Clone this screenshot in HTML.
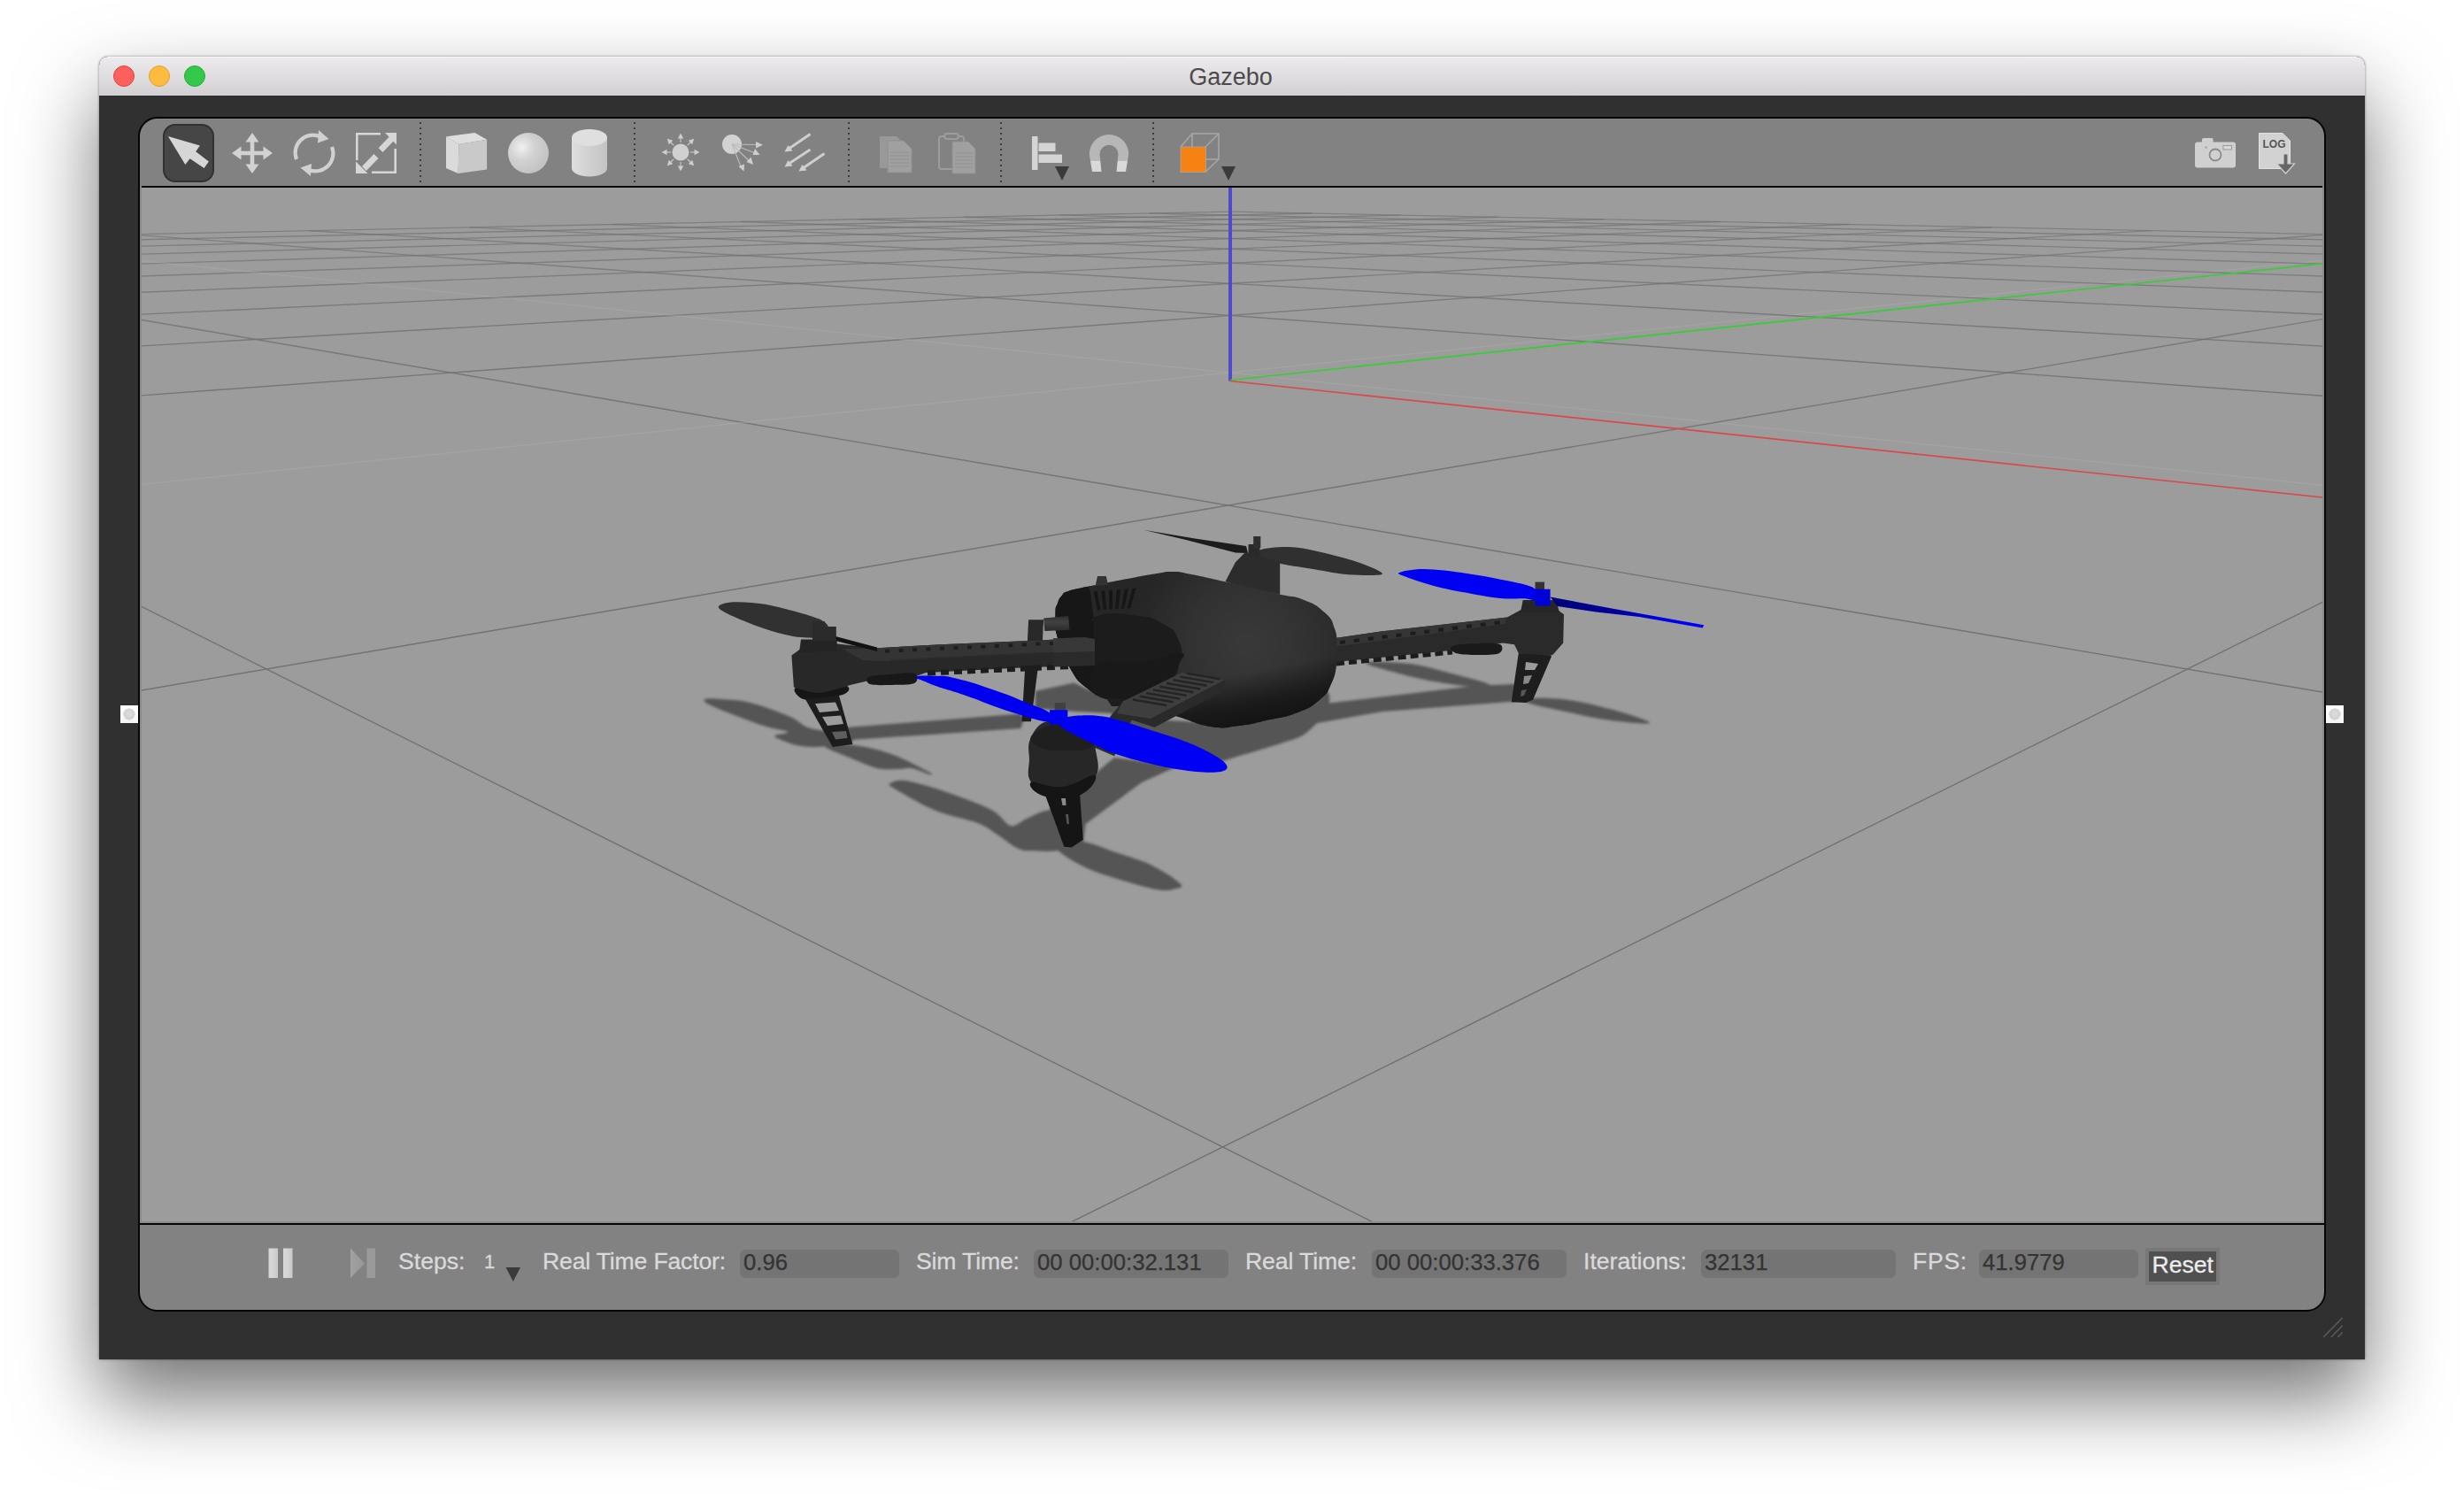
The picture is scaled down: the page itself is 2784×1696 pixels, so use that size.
<!DOCTYPE html>
<html><head><meta charset="utf-8"><title>Gazebo</title>
<style>
*{box-sizing:border-box;margin:0;padding:0}
html,body{width:2784px;height:1696px;background:#fff;overflow:hidden}
body{position:relative;font-family:"Liberation Sans",sans-serif}
.win{position:absolute;left:112px;top:64px;width:2560px;height:1472px;background:#303030;border-radius:10px 10px 0 0;
 box-shadow:0 44px 90px rgba(0,0,0,.55),0 0 3px rgba(0,0,0,.45)}
.tb{position:absolute;left:0;top:0;width:2560px;height:44px;border-radius:10px 10px 0 0;background:linear-gradient(#eceaec,#d2d0d2);border-top:1px solid #f6f6f6}
.tl{position:absolute;top:9px;width:24px;height:24px;border-radius:50%}
.title{position:absolute;left:-1.5px;width:2560px;top:5.5px;text-align:center;font-size:27px;line-height:32px;color:#4b4b4b}
.panel{position:absolute;left:156px;top:132px;width:2472px;height:1350px;border:2px solid #050505;border-radius:22px;background:#828282}
.abs{position:absolute}
.sep{position:absolute;top:138px;width:2px;height:68px;background:repeating-linear-gradient(#3c3c3c 0 2px,transparent 2px 6px)}
.lbl{position:absolute;top:1409px;font-size:26.6px;line-height:32px;color:#dadada;white-space:nowrap;-webkit-text-stroke:0.3px #dadada}
.fld{position:absolute;top:1412px;height:32px;border-radius:7px;background:#747474;color:#333;font-size:25.7px;line-height:29px;padding-left:4px;white-space:nowrap;-webkit-text-stroke:0.25px #333}
</style></head><body>
<div class="win"><div class="tb">
<div class="tl" style="left:16px;background:#fc605c;border:1px solid #e0443e"></div>
<div class="tl" style="left:56px;background:#fdbc40;border:1px solid #dea034"></div>
<div class="tl" style="left:96px;background:#34c84a;border:1px solid #27aa35"></div>
<div class="title">Gazebo</div></div></div>
<div class="panel"></div>
<div class="abs" style="left:160px;top:210px;width:2464px;height:2px;background:#050505"></div>
<div class="abs" style="left:158px;top:1382px;width:2468px;height:2px;background:#050505"></div>
<div class="abs" style="left:158px;top:212px;width:2468px;height:1170px;background:#8b8b8b"></div>
<div class="sep" style="left:474px"></div><div class="sep" style="left:716px"></div><div class="sep" style="left:958px"></div><div class="sep" style="left:1130px"></div><div class="sep" style="left:1302px"></div>
<svg class="abs" style="left:158px;top:134px" width="2468" height="76" viewBox="158 134 2468 76">
<defs>
<radialGradient id="sph" cx="0.34" cy="0.36" r="0.7"><stop offset="0" stop-color="#f0f0f0"/><stop offset="0.45" stop-color="#d2d2d2"/><stop offset="1" stop-color="#c2c2c2"/></radialGradient>
<linearGradient id="cyl" x1="0" x2="1"><stop offset="0" stop-color="#dedede"/><stop offset="1" stop-color="#c3c3c3"/></linearGradient>
<linearGradient id="mag" x1="0" x2="0" y1="0" y2="1"><stop offset="0" stop-color="#b6b6b6"/><stop offset="0.7" stop-color="#b8b8b8"/><stop offset="0.72" stop-color="#dadada"/><stop offset="1" stop-color="#d6d6d6"/></linearGradient>
</defs>
<!-- select -->
<rect x="185" y="141" width="56" height="64" rx="13" fill="#464646" stroke="#313131" stroke-width="2"/>
<polygon points="189.9,153.9 225.9,164.6 221.2,171.2 235.9,182.6 230.6,189.9 214.6,179.2 209.3,185.9" fill="#d6d6d6"/>
<!-- move -->
<g fill="#d2d2d2"><rect x="282.700" y="156" width="4.600" height="34"/><rect x="268" y="170.700" width="34" height="4.600"/>
<polygon points="285,150 292.5,160.5 277.5,160.5"/><polygon points="285,196 292.5,185.500 277.5,185.5"/>
<polygon points="262,173 272.5,165.5 272.5,180.5"/><polygon points="308,173 297.5,165.5 297.5,180.5"/></g>
<!-- rotate -->
<g fill="none" stroke="#d0d0d0" stroke-width="4.200"><path d="M335,180 A20,20 0 0 1 362,154.500"/><path d="M375,166 A20,20 0 0 1 349,192"/></g>
<polygon points="360,147 371.500,157 359,161.500" fill="#d0d0d0"/><polygon points="351,199 339.500,189.500 352,185" fill="#d0d0d0"/>
<!-- scale -->
<g fill="none" stroke="#d6d6d6" stroke-width="2.6"><path d="M430,151.300 H403.300 V181"/><path d="M420,194.700 H446.700 V168"/></g>
<g fill="#d6d6d6"><polygon points="435,150 448,150 448,163.500"/><polygon points="402,182.500 402,196 415.500,196"/>
<polygon points="427.600,167.300 441,153.300 446,158 432.500,172"/><polygon points="409,188 422.500,174 427.500,179 413.800,193"/></g>
<!-- box -->
<polygon points="504,154.400 536.500,150.100 550.100,157.700 518.300,162.900" fill="#dedede"/>
<polygon points="504,154.400 518.300,162.900 517.700,196 504,190.100" fill="#dadada"/>
<polygon points="518.300,162.900 550.100,157.700 550.100,191.400 517.700,196" fill="#c9c9c9"/>
<!-- sphere -->
<circle cx="597" cy="173" r="23" fill="url(#sph)"/>
<!-- cylinder -->
<path d="M646,155.500 V190 A20,9.500 0 0 0 686,190 V155.500 Z" fill="url(#cyl)"/>
<ellipse cx="666" cy="155.500" rx="20" ry="9.500" fill="#dfdfdf"/>
<!-- point light -->
<g fill="#cdcdcd" stroke="#c4c4c4"><circle cx="769" cy="172" r="9.500" stroke="none" fill="#d0d0d0"/>
<g id="ray"><line x1="769" y1="161" x2="769" y2="154" stroke-width="1.200"/><polygon points="769,150.500 772.200,156.500 765.800,156.500" stroke="none"/></g>
<use href="#ray" transform="rotate(45 769 172)"/><use href="#ray" transform="rotate(90 769 172)"/><use href="#ray" transform="rotate(135 769 172)"/><use href="#ray" transform="rotate(180 769 172)"/><use href="#ray" transform="rotate(225 769 172)"/><use href="#ray" transform="rotate(270 769 172)"/><use href="#ray" transform="rotate(315 769 172)"/></g>
<!-- spot light -->
<g fill="#cecece" stroke="#bcbcbc" stroke-width="1.200"><circle cx="827" cy="163" r="11" stroke="none" fill="#d2d2d2"/>
<line x1="827" y1="163" x2="855" y2="163.500"/><line x1="827" y1="163" x2="852" y2="172.500"/><line x1="827" y1="163" x2="846" y2="181.500"/><line x1="827" y1="163" x2="837" y2="188"/>
<g stroke="none"><polygon points="862,163.700 854,160 854,167.500"/><polygon points="858.500,175 850.500,175 853,168"/><polygon points="851,186 843.500,183 848.500,177.500"/><polygon points="840.500,193.500 834.500,188 841,185.500"/></g></g>
<!-- directional -->
<g stroke="#cecece" stroke-width="3"><line x1="915.500" y1="151.500" x2="892" y2="167.500"/><line x1="915.500" y1="169" x2="892" y2="184.500"/><line x1="931.500" y1="173.500" x2="908" y2="189.500"/></g>
<g fill="#d0d0d0"><polygon points="886.500,171.500 890.500,164 895.500,170.500"/><polygon points="886.500,188.500 890.500,181 895.500,187.500"/><polygon points="902.500,193.500 906.500,186 911.500,192.500"/></g>
<!-- copy (disabled) -->
<g fill="#9b9b9b"><path d="M994,154 H1013 L1021,162 V190 H994 Z" fill="#999"/><path d="M1003,159 H1021 L1030,168 V195 H1003 Z" fill="#a0a0a0" stroke="#8e8e8e" stroke-width="1"/></g>
<g stroke="#929292" stroke-width="1"><line x1="1006" y1="172" x2="1027" y2="172"/><line x1="1006" y1="176" x2="1027" y2="176"/><line x1="1006" y1="180" x2="1027" y2="180"/><line x1="1006" y1="184" x2="1027" y2="184"/><line x1="1006" y1="188" x2="1027" y2="188"/></g>
<!-- paste (disabled) -->
<rect x="1061" y="154" width="28" height="37" rx="3" fill="none" stroke="#9c9c9c" stroke-width="2"/><rect x="1067" y="151" width="16" height="6" rx="3" fill="#828282" stroke="#9c9c9c" stroke-width="2"/>
<path d="M1076,160 H1094 L1102,168 V196 H1076 Z" fill="#a0a0a0" stroke="#8e8e8e" stroke-width="1"/>
<g stroke="#929292" stroke-width="1"><line x1="1079" y1="173" x2="1099" y2="173"/><line x1="1079" y1="177" x2="1099" y2="177"/><line x1="1079" y1="181" x2="1099" y2="181"/><line x1="1079" y1="185" x2="1099" y2="185"/><line x1="1079" y1="189" x2="1099" y2="189"/></g>
<!-- align -->
<g fill="#d4d4d4"><rect x="1166" y="154" width="6.500" height="38"/><rect x="1173.500" y="161.500" width="19" height="9.500"/><rect x="1173.500" y="174.500" width="26.500" height="9.500"/></g>
<polygon points="1192,188 1208,188 1200,204" fill="#3a3a3a"/>
<!-- magnet -->
<path d="M1230.800,174.200 A22.200,22.200 0 0 1 1275.200,174.200 L1272,194 L1261.500,194 L1263.500,174.200 A10.500,10.500 0 0 0 1242.500,174.200 L1244.500,194 L1234,194 Z" fill="url(#mag)"/>
<!-- orange cube -->
<g fill="none" stroke="#a6a6a6" stroke-width="1.600"><rect x="1347" y="151" width="30" height="29"/><line x1="1334" y1="166" x2="1347" y2="151"/><line x1="1362" y1="166" x2="1377" y2="151"/><line x1="1362" y1="194" x2="1377" y2="180"/><line x1="1334" y1="194" x2="1347" y2="180"/></g>
<rect x="1334" y="166" width="28.500" height="28.500" fill="#f58213" stroke="#b0a090" stroke-width="1"/>
<polygon points="1380,188 1396,188 1388,204" fill="#3a3a3a"/>
<!-- camera -->
<g fill="#d0d0d0"><rect x="2480" y="160.500" width="46" height="29" rx="3"/><rect x="2488" y="156" width="12.500" height="6" rx="1.500"/></g>
<circle cx="2503" cy="175" r="6.500" fill="#d0d0d0" stroke="#8a8a8a" stroke-width="1.800"/><rect x="2512" y="164.500" width="9.500" height="4.500" fill="#d8d8d8" stroke="#9a9a9a" stroke-width="1"/><rect x="2491.500" y="165.500" width="2" height="2" fill="#999"/>
<!-- log -->
<path d="M2552.500,150.500 H2579 L2587.500,159 V190.500 H2552.500 Z" fill="#d2d2d2" stroke="#e2e2e2" stroke-width="1"/>
<text x="2556.500" y="167.300" font-family="Liberation Sans,sans-serif" font-weight="bold" font-size="12.500" fill="#555" textLength="26" lengthAdjust="spacingAndGlyphs">LOG</text>
<path d="M2580,174 H2585 V185 H2592.500 L2582.500,196 L2572.500,185 H2580 Z" fill="#666" stroke="#cfcfcf" stroke-width="1.200"/>
</svg>
<svg class="vp" width="2464" height="1168" viewBox="160 212 2464 1168" style="position:absolute;left:160px;top:212px">
<rect x="160" y="212" width="2464" height="1170" fill="#9c9c9c"/>
<g stroke-width="1.4" fill="none">
<defs><linearGradient id="g1" gradientUnits="userSpaceOnUse" x1="130.0" y1="265.2" x2="1390.7" y2="239.1"><stop offset="0.00" stop-color="#707070" stop-opacity="0.66"/><stop offset="0.15" stop-color="#707070" stop-opacity="0.66"/><stop offset="0.30" stop-color="#707070" stop-opacity="0.66"/><stop offset="0.50" stop-color="#707070" stop-opacity="0.66"/><stop offset="0.70" stop-color="#707070" stop-opacity="0.66"/><stop offset="0.85" stop-color="#707070" stop-opacity="0.66"/><stop offset="1.00" stop-color="#707070" stop-opacity="0.66"/></linearGradient><linearGradient id="g2" gradientUnits="userSpaceOnUse" x1="130.0" y1="271.5" x2="1482.9" y2="241.0"><stop offset="0.00" stop-color="#707070" stop-opacity="0.66"/><stop offset="0.15" stop-color="#707070" stop-opacity="0.66"/><stop offset="0.30" stop-color="#707070" stop-opacity="0.66"/><stop offset="0.50" stop-color="#707070" stop-opacity="0.66"/><stop offset="0.70" stop-color="#707070" stop-opacity="0.66"/><stop offset="0.85" stop-color="#707070" stop-opacity="0.66"/><stop offset="1.00" stop-color="#707070" stop-opacity="0.66"/></linearGradient><linearGradient id="g3" gradientUnits="userSpaceOnUse" x1="130.0" y1="278.9" x2="1583.0" y2="243.1"><stop offset="0.00" stop-color="#707070" stop-opacity="0.66"/><stop offset="0.15" stop-color="#707070" stop-opacity="0.66"/><stop offset="0.30" stop-color="#707070" stop-opacity="0.66"/><stop offset="0.50" stop-color="#707070" stop-opacity="0.66"/><stop offset="0.70" stop-color="#707070" stop-opacity="0.66"/><stop offset="0.85" stop-color="#707070" stop-opacity="0.66"/><stop offset="1.00" stop-color="#707070" stop-opacity="0.66"/></linearGradient><linearGradient id="g4" gradientUnits="userSpaceOnUse" x1="130.0" y1="287.9" x2="1692.3" y2="245.3"><stop offset="0.00" stop-color="#707070" stop-opacity="0.66"/><stop offset="0.15" stop-color="#707070" stop-opacity="0.66"/><stop offset="0.30" stop-color="#707070" stop-opacity="0.66"/><stop offset="0.50" stop-color="#707070" stop-opacity="0.66"/><stop offset="0.70" stop-color="#707070" stop-opacity="0.66"/><stop offset="0.85" stop-color="#707070" stop-opacity="0.66"/><stop offset="1.00" stop-color="#707070" stop-opacity="0.66"/></linearGradient><linearGradient id="g5" gradientUnits="userSpaceOnUse" x1="130.0" y1="299.0" x2="1811.9" y2="247.8"><stop offset="0.00" stop-color="#707070" stop-opacity="0.66"/><stop offset="0.15" stop-color="#707070" stop-opacity="0.66"/><stop offset="0.30" stop-color="#707070" stop-opacity="0.66"/><stop offset="0.50" stop-color="#707070" stop-opacity="0.66"/><stop offset="0.70" stop-color="#707070" stop-opacity="0.66"/><stop offset="0.85" stop-color="#707070" stop-opacity="0.66"/><stop offset="1.00" stop-color="#707070" stop-opacity="0.66"/></linearGradient><linearGradient id="g6" gradientUnits="userSpaceOnUse" x1="130.0" y1="313.1" x2="1943.5" y2="250.5"><stop offset="0.00" stop-color="#707070" stop-opacity="0.69"/><stop offset="0.15" stop-color="#707070" stop-opacity="0.66"/><stop offset="0.30" stop-color="#707070" stop-opacity="0.66"/><stop offset="0.50" stop-color="#707070" stop-opacity="0.66"/><stop offset="0.70" stop-color="#707070" stop-opacity="0.66"/><stop offset="0.85" stop-color="#707070" stop-opacity="0.66"/><stop offset="1.00" stop-color="#707070" stop-opacity="0.66"/></linearGradient><linearGradient id="g7" gradientUnits="userSpaceOnUse" x1="130.0" y1="331.4" x2="2088.9" y2="253.5"><stop offset="0.00" stop-color="#707070" stop-opacity="0.74"/><stop offset="0.15" stop-color="#707070" stop-opacity="0.71"/><stop offset="0.30" stop-color="#707070" stop-opacity="0.67"/><stop offset="0.50" stop-color="#707070" stop-opacity="0.66"/><stop offset="0.70" stop-color="#707070" stop-opacity="0.66"/><stop offset="0.85" stop-color="#707070" stop-opacity="0.66"/><stop offset="1.00" stop-color="#707070" stop-opacity="0.66"/></linearGradient><linearGradient id="g8" gradientUnits="userSpaceOnUse" x1="130.0" y1="356.5" x2="2250.5" y2="256.9"><stop offset="0.00" stop-color="#707070" stop-opacity="0.79"/><stop offset="0.15" stop-color="#707070" stop-opacity="0.76"/><stop offset="0.30" stop-color="#707070" stop-opacity="0.73"/><stop offset="0.50" stop-color="#707070" stop-opacity="0.67"/><stop offset="0.70" stop-color="#707070" stop-opacity="0.66"/><stop offset="0.85" stop-color="#707070" stop-opacity="0.66"/><stop offset="1.00" stop-color="#707070" stop-opacity="0.66"/></linearGradient><linearGradient id="g9" gradientUnits="userSpaceOnUse" x1="130.0" y1="392.6" x2="2431.0" y2="260.6"><stop offset="0.00" stop-color="#707070" stop-opacity="0.83"/><stop offset="0.15" stop-color="#707070" stop-opacity="0.81"/><stop offset="0.30" stop-color="#707070" stop-opacity="0.78"/><stop offset="0.50" stop-color="#707070" stop-opacity="0.73"/><stop offset="0.70" stop-color="#707070" stop-opacity="0.66"/><stop offset="0.85" stop-color="#707070" stop-opacity="0.66"/><stop offset="1.00" stop-color="#707070" stop-opacity="0.66"/></linearGradient><linearGradient id="g10" gradientUnits="userSpaceOnUse" x1="130.0" y1="670.5" x2="1613.6" y2="1412.0"><stop offset="0.00" stop-color="#707070" stop-opacity="0.96"/><stop offset="0.15" stop-color="#707070" stop-opacity="0.97"/><stop offset="0.30" stop-color="#707070" stop-opacity="0.99"/><stop offset="0.50" stop-color="#707070" stop-opacity="1.00"/><stop offset="0.70" stop-color="#707070" stop-opacity="1.00"/><stop offset="0.85" stop-color="#707070" stop-opacity="1.00"/><stop offset="1.00" stop-color="#707070" stop-opacity="1.00"/></linearGradient><linearGradient id="g11" gradientUnits="userSpaceOnUse" x1="130.0" y1="449.1" x2="2634.0" y2="264.8"><stop offset="0.00" stop-color="#707070" stop-opacity="0.88"/><stop offset="0.15" stop-color="#707070" stop-opacity="0.86"/><stop offset="0.30" stop-color="#707070" stop-opacity="0.83"/><stop offset="0.50" stop-color="#707070" stop-opacity="0.79"/><stop offset="0.70" stop-color="#707070" stop-opacity="0.71"/><stop offset="0.85" stop-color="#707070" stop-opacity="0.66"/><stop offset="1.00" stop-color="#707070" stop-opacity="0.66"/></linearGradient><linearGradient id="g12" gradientUnits="userSpaceOnUse" x1="130.0" y1="356.3" x2="2654.0" y2="787.2"><stop offset="0.00" stop-color="#707070" stop-opacity="0.78"/><stop offset="0.15" stop-color="#707070" stop-opacity="0.86"/><stop offset="0.30" stop-color="#707070" stop-opacity="0.90"/><stop offset="0.50" stop-color="#707070" stop-opacity="0.93"/><stop offset="0.70" stop-color="#707070" stop-opacity="0.95"/><stop offset="0.85" stop-color="#707070" stop-opacity="0.97"/><stop offset="1.00" stop-color="#707070" stop-opacity="0.97"/></linearGradient><linearGradient id="g13" gradientUnits="userSpaceOnUse" x1="130.0" y1="785.1" x2="2654.0" y2="355.5"><stop offset="0.00" stop-color="#707070" stop-opacity="0.97"/><stop offset="0.15" stop-color="#707070" stop-opacity="0.97"/><stop offset="0.30" stop-color="#707070" stop-opacity="0.95"/><stop offset="0.50" stop-color="#707070" stop-opacity="0.93"/><stop offset="0.70" stop-color="#707070" stop-opacity="0.90"/><stop offset="0.85" stop-color="#707070" stop-opacity="0.86"/><stop offset="1.00" stop-color="#707070" stop-opacity="0.78"/></linearGradient><linearGradient id="g14" gradientUnits="userSpaceOnUse" x1="147.1" y1="264.9" x2="2654.0" y2="449.5"><stop offset="0.00" stop-color="#707070" stop-opacity="0.66"/><stop offset="0.15" stop-color="#707070" stop-opacity="0.66"/><stop offset="0.30" stop-color="#707070" stop-opacity="0.71"/><stop offset="0.50" stop-color="#707070" stop-opacity="0.79"/><stop offset="0.70" stop-color="#707070" stop-opacity="0.83"/><stop offset="0.85" stop-color="#707070" stop-opacity="0.86"/><stop offset="1.00" stop-color="#707070" stop-opacity="0.88"/></linearGradient><linearGradient id="g15" gradientUnits="userSpaceOnUse" x1="1147.4" y1="1412.0" x2="2654.0" y2="665.6"><stop offset="0.00" stop-color="#707070" stop-opacity="1.00"/><stop offset="0.15" stop-color="#707070" stop-opacity="1.00"/><stop offset="0.30" stop-color="#707070" stop-opacity="1.00"/><stop offset="0.50" stop-color="#707070" stop-opacity="1.00"/><stop offset="0.70" stop-color="#707070" stop-opacity="0.99"/><stop offset="0.85" stop-color="#707070" stop-opacity="0.97"/><stop offset="1.00" stop-color="#707070" stop-opacity="0.96"/></linearGradient><linearGradient id="g16" gradientUnits="userSpaceOnUse" x1="350.1" y1="260.7" x2="2654.0" y2="392.8"><stop offset="0.00" stop-color="#707070" stop-opacity="0.66"/><stop offset="0.15" stop-color="#707070" stop-opacity="0.66"/><stop offset="0.30" stop-color="#707070" stop-opacity="0.66"/><stop offset="0.50" stop-color="#707070" stop-opacity="0.73"/><stop offset="0.70" stop-color="#707070" stop-opacity="0.78"/><stop offset="0.85" stop-color="#707070" stop-opacity="0.81"/><stop offset="1.00" stop-color="#707070" stop-opacity="0.83"/></linearGradient><linearGradient id="g17" gradientUnits="userSpaceOnUse" x1="530.7" y1="256.9" x2="2654.0" y2="356.6"><stop offset="0.00" stop-color="#707070" stop-opacity="0.66"/><stop offset="0.15" stop-color="#707070" stop-opacity="0.66"/><stop offset="0.30" stop-color="#707070" stop-opacity="0.66"/><stop offset="0.50" stop-color="#707070" stop-opacity="0.67"/><stop offset="0.70" stop-color="#707070" stop-opacity="0.73"/><stop offset="0.85" stop-color="#707070" stop-opacity="0.76"/><stop offset="1.00" stop-color="#707070" stop-opacity="0.79"/></linearGradient><linearGradient id="g18" gradientUnits="userSpaceOnUse" x1="692.2" y1="253.6" x2="2654.0" y2="331.5"><stop offset="0.00" stop-color="#707070" stop-opacity="0.66"/><stop offset="0.15" stop-color="#707070" stop-opacity="0.66"/><stop offset="0.30" stop-color="#707070" stop-opacity="0.66"/><stop offset="0.50" stop-color="#707070" stop-opacity="0.66"/><stop offset="0.70" stop-color="#707070" stop-opacity="0.68"/><stop offset="0.85" stop-color="#707070" stop-opacity="0.71"/><stop offset="1.00" stop-color="#707070" stop-opacity="0.74"/></linearGradient><linearGradient id="g19" gradientUnits="userSpaceOnUse" x1="837.7" y1="250.5" x2="2654.0" y2="313.1"><stop offset="0.00" stop-color="#707070" stop-opacity="0.66"/><stop offset="0.15" stop-color="#707070" stop-opacity="0.66"/><stop offset="0.30" stop-color="#707070" stop-opacity="0.66"/><stop offset="0.50" stop-color="#707070" stop-opacity="0.66"/><stop offset="0.70" stop-color="#707070" stop-opacity="0.66"/><stop offset="0.85" stop-color="#707070" stop-opacity="0.66"/><stop offset="1.00" stop-color="#707070" stop-opacity="0.69"/></linearGradient><linearGradient id="g20" gradientUnits="userSpaceOnUse" x1="969.3" y1="247.8" x2="2654.0" y2="299.1"><stop offset="0.00" stop-color="#707070" stop-opacity="0.66"/><stop offset="0.15" stop-color="#707070" stop-opacity="0.66"/><stop offset="0.30" stop-color="#707070" stop-opacity="0.66"/><stop offset="0.50" stop-color="#707070" stop-opacity="0.66"/><stop offset="0.70" stop-color="#707070" stop-opacity="0.66"/><stop offset="0.85" stop-color="#707070" stop-opacity="0.66"/><stop offset="1.00" stop-color="#707070" stop-opacity="0.66"/></linearGradient><linearGradient id="g21" gradientUnits="userSpaceOnUse" x1="1089.0" y1="245.3" x2="2654.0" y2="287.9"><stop offset="0.00" stop-color="#707070" stop-opacity="0.66"/><stop offset="0.15" stop-color="#707070" stop-opacity="0.66"/><stop offset="0.30" stop-color="#707070" stop-opacity="0.66"/><stop offset="0.50" stop-color="#707070" stop-opacity="0.66"/><stop offset="0.70" stop-color="#707070" stop-opacity="0.66"/><stop offset="0.85" stop-color="#707070" stop-opacity="0.66"/><stop offset="1.00" stop-color="#707070" stop-opacity="0.66"/></linearGradient><linearGradient id="g22" gradientUnits="userSpaceOnUse" x1="1198.3" y1="243.1" x2="2654.0" y2="278.9"><stop offset="0.00" stop-color="#707070" stop-opacity="0.66"/><stop offset="0.15" stop-color="#707070" stop-opacity="0.66"/><stop offset="0.30" stop-color="#707070" stop-opacity="0.66"/><stop offset="0.50" stop-color="#707070" stop-opacity="0.66"/><stop offset="0.70" stop-color="#707070" stop-opacity="0.66"/><stop offset="0.85" stop-color="#707070" stop-opacity="0.66"/><stop offset="1.00" stop-color="#707070" stop-opacity="0.66"/></linearGradient><linearGradient id="g23" gradientUnits="userSpaceOnUse" x1="1298.5" y1="241.0" x2="2654.0" y2="271.5"><stop offset="0.00" stop-color="#707070" stop-opacity="0.66"/><stop offset="0.15" stop-color="#707070" stop-opacity="0.66"/><stop offset="0.30" stop-color="#707070" stop-opacity="0.66"/><stop offset="0.50" stop-color="#707070" stop-opacity="0.66"/><stop offset="0.70" stop-color="#707070" stop-opacity="0.66"/><stop offset="0.85" stop-color="#707070" stop-opacity="0.66"/><stop offset="1.00" stop-color="#707070" stop-opacity="0.66"/></linearGradient><linearGradient id="g24" gradientUnits="userSpaceOnUse" x1="1390.7" y1="239.1" x2="2654.0" y2="265.2"><stop offset="0.00" stop-color="#707070" stop-opacity="0.66"/><stop offset="0.15" stop-color="#707070" stop-opacity="0.66"/><stop offset="0.30" stop-color="#707070" stop-opacity="0.66"/><stop offset="0.50" stop-color="#707070" stop-opacity="0.66"/><stop offset="0.70" stop-color="#707070" stop-opacity="0.66"/><stop offset="0.85" stop-color="#707070" stop-opacity="0.66"/><stop offset="1.00" stop-color="#707070" stop-opacity="0.66"/></linearGradient></defs>
<line x1="130.0" y1="265.2" x2="1390.7" y2="239.1" stroke="url(#g1)"/>
<line x1="130.0" y1="271.5" x2="1482.9" y2="241.0" stroke="url(#g2)"/>
<line x1="130.0" y1="278.9" x2="1583.0" y2="243.1" stroke="url(#g3)"/>
<line x1="130.0" y1="287.9" x2="1692.3" y2="245.3" stroke="url(#g4)"/>
<line x1="130.0" y1="299.0" x2="1811.9" y2="247.8" stroke="url(#g5)"/>
<line x1="130.0" y1="313.1" x2="1943.5" y2="250.5" stroke="url(#g6)"/>
<line x1="130.0" y1="331.4" x2="2088.9" y2="253.5" stroke="url(#g7)"/>
<line x1="130.0" y1="356.5" x2="2250.5" y2="256.9" stroke="url(#g8)"/>
<line x1="130.0" y1="392.6" x2="2431.0" y2="260.6" stroke="url(#g9)"/>
<line x1="130.0" y1="670.5" x2="1613.6" y2="1412.0" stroke="url(#g10)"/>
<line x1="130.0" y1="449.1" x2="2634.0" y2="264.8" stroke="url(#g11)"/>
<line x1="130.0" y1="356.3" x2="2654.0" y2="787.2" stroke="url(#g12)"/>
<line x1="130.0" y1="550.5" x2="2654.0" y2="291.1" stroke="#b8b8b8" stroke-opacity="0.28"/>
<line x1="130.0" y1="291.5" x2="2654.0" y2="551.3" stroke="#b8b8b8" stroke-opacity="0.28"/>
<line x1="130.0" y1="785.1" x2="2654.0" y2="355.5" stroke="url(#g13)"/>
<line x1="147.1" y1="264.9" x2="2654.0" y2="449.5" stroke="url(#g14)"/>
<line x1="1147.4" y1="1412.0" x2="2654.0" y2="665.6" stroke="url(#g15)"/>
<line x1="350.1" y1="260.7" x2="2654.0" y2="392.8" stroke="url(#g16)"/>
<line x1="530.7" y1="256.9" x2="2654.0" y2="356.6" stroke="url(#g17)"/>
<line x1="692.2" y1="253.6" x2="2654.0" y2="331.5" stroke="url(#g18)"/>
<line x1="837.7" y1="250.5" x2="2654.0" y2="313.1" stroke="url(#g19)"/>
<line x1="969.3" y1="247.8" x2="2654.0" y2="299.1" stroke="url(#g20)"/>
<line x1="1089.0" y1="245.3" x2="2654.0" y2="287.9" stroke="url(#g21)"/>
<line x1="1198.3" y1="243.1" x2="2654.0" y2="278.9" stroke="url(#g22)"/>
<line x1="1298.5" y1="241.0" x2="2654.0" y2="271.5" stroke="url(#g23)"/>
<line x1="1390.7" y1="239.1" x2="2654.0" y2="265.2" stroke="url(#g24)"/>
</g>
<g fill="none"><line x1="1390" y1="212" x2="1390" y2="430.500" stroke="#4d4dcc" stroke-width="4"/>
<line x1="1390" y1="429.500" x2="2624" y2="298" stroke="#33cf33" stroke-width="1.700"/>
<line x1="1390" y1="430.500" x2="2624" y2="562" stroke="#da4848" stroke-width="1.700"/></g>
<defs><filter id="shb" x="-5%" y="-5%" width="110%" height="110%"><feGaussianBlur stdDeviation="1.6"/></filter>
<radialGradient id="bodyg" gradientUnits="userSpaceOnUse" cx="1410" cy="728" r="130"><stop offset="0" stop-color="#393939"/><stop offset="0.5" stop-color="#323232"/><stop offset="1" stop-color="#262626"/></radialGradient>
<linearGradient id="blu2" gradientUnits="userSpaceOnUse" x1="1752" y1="0" x2="1925" y2="0"><stop offset="0" stop-color="#00007a"/><stop offset="0.45" stop-color="#0000a0"/><stop offset="0.7" stop-color="#0000e8"/><stop offset="1" stop-color="#0000ff"/></linearGradient><linearGradient id="stubg" x1="0" x2="0" y1="0" y2="1"><stop offset="0" stop-color="#2e2e2e"/><stop offset="0.4" stop-color="#424242"/><stop offset="1" stop-color="#2a2a2a"/></linearGradient><linearGradient id="undg" gradientUnits="userSpaceOnUse" x1="1400" y1="762" x2="1412" y2="822"><stop offset="0" stop-color="#141414" stop-opacity="0"/><stop offset="0.55" stop-color="#141414" stop-opacity="0.75"/><stop offset="1" stop-color="#121212" stop-opacity="1"/></linearGradient></defs>
<g fill="#545454" filter="url(#shb)"><path d="M796.0,790.0 C798.0,788.8 806.3,789.3 815.0,790.0 C823.7,790.7 835.0,790.7 848.0,794.0 C861.0,797.3 882.2,805.3 893.0,810.0 C903.8,814.7 905.2,819.3 913.0,822.0 C920.8,824.7 931.3,826.0 940.0,826.0 C948.7,826.0 960.8,820.3 965.0,822.0 C969.2,823.7 970.0,832.5 965.0,836.0 C960.0,839.5 945.0,841.8 935.0,843.0 C925.0,844.2 914.2,844.3 905.0,843.0 C895.8,841.7 884.8,837.0 880.0,835.0 C875.2,833.0 874.3,832.3 876.0,831.0 C877.7,829.7 891.7,828.7 890.0,827.0 C888.3,825.3 875.2,823.8 866.0,821.0 C856.8,818.2 845.5,814.0 835.0,810.0 C824.5,806.0 809.5,800.3 803.0,797.0 C796.5,793.7 794.0,791.2 796.0,790.0Z"/><path d="M940.0,824.0 L965.0,821.2 L1153.4,806.6 L1157.0,812.0 L1153.4,822.9 L965.0,835.8 L940.0,842.0Z"/><path d="M932.0,843.0 C932.8,840.7 952.5,840.5 965.0,842.0 C977.5,843.5 993.0,847.0 1007.0,852.0 C1021.0,857.0 1041.8,868.2 1049.0,872.0 C1056.2,875.8 1053.2,875.7 1050.0,875.0 C1046.8,874.3 1035.8,869.0 1030.0,868.0 C1024.2,867.0 1021.5,869.0 1015.0,869.0 C1008.5,869.0 1000.2,870.2 991.0,868.0 C981.8,865.8 969.8,860.2 960.0,856.0 C950.2,851.8 931.2,845.3 932.0,843.0Z"/><path d="M1005.6,885.4 C1007.8,883.9 1012.4,880.4 1023.5,882.1 C1034.6,883.9 1056.0,890.4 1072.2,895.9 C1088.4,901.4 1109.3,909.2 1120.9,915.4 C1132.5,921.6 1135.5,931.4 1142.0,933.0 C1148.5,934.6 1153.0,927.9 1160.0,925.0 C1167.0,922.1 1177.3,915.8 1184.0,915.8 C1190.7,915.8 1197.2,918.0 1200.0,925.0 C1202.8,932.0 1206.8,952.0 1201.0,958.0 C1195.2,964.0 1173.7,961.3 1165.0,961.3 C1156.3,961.3 1154.7,960.8 1148.7,958.0 C1142.7,955.2 1136.3,949.3 1129.0,944.6 C1121.7,939.9 1116.9,934.9 1104.7,930.0 C1092.5,925.1 1071.7,921.9 1056.0,915.4 C1040.3,908.9 1018.9,896.0 1010.5,891.0 C1002.1,886.0 1003.4,886.9 1005.6,885.4Z"/><path d="M1259.0,856.0 L1330.0,866.0 L1290.0,884.0 L1226.6,931.0 L1224.0,951.0 L1200.0,958.0 L1184.4,915.8 L1235.0,876.0Z"/><path d="M1200.0,955.0 C1204.6,953.2 1213.6,949.6 1223.8,951.0 C1234.0,952.4 1248.2,958.8 1261.2,963.3 C1274.2,967.8 1289.6,971.9 1301.8,977.9 C1314.0,983.9 1330.2,994.5 1334.2,999.0 C1338.2,1003.5 1330.1,1003.6 1326.1,1004.7 C1322.0,1005.8 1318.0,1006.7 1309.9,1005.5 C1301.8,1004.3 1290.9,1001.4 1277.4,997.4 C1263.9,993.4 1242.2,987.2 1228.7,981.2 C1215.2,975.2 1201.0,966.1 1196.2,961.7 C1191.4,957.3 1195.4,956.8 1200.0,955.0Z"/><path d="M1169.8,781.1 L1213.6,771.4 L1229.9,779.5 L1274.0,791.0 L1270.0,802.0 L1255.0,806.0 L1213.6,803.8 L1169.8,800.6Z"/><path d="M1255.0,800.0 L1312.0,812.0 L1335.0,832.0 L1290.0,826.0 L1258.0,814.0Z"/><path d="M1290.0,815.0 C1301.3,810.0 1342.8,817.5 1367.9,815.0 C1393.1,812.5 1419.7,805.8 1440.9,800.0 C1462.1,794.2 1485.2,779.9 1495.0,780.0 C1504.8,780.1 1503.2,792.6 1500.0,800.6 C1496.8,808.6 1484.5,821.5 1476.0,828.0 C1467.5,834.5 1461.4,835.2 1448.7,839.6 C1436.0,844.0 1413.1,850.5 1400.0,854.2 C1386.9,857.9 1380.0,861.0 1370.0,862.0 C1360.0,863.0 1351.7,862.8 1340.0,860.0 C1328.3,857.2 1308.3,852.5 1300.0,845.0 C1291.7,837.5 1278.7,820.0 1290.0,815.0Z"/><path d="M1440.0,800.0 L1490.9,795.8 L1667.9,774.7 L1712.0,773.1 L1712.0,792.5 L1562.3,803.9 L1471.4,820.1 L1440.0,830.0Z"/><path d="M1546.1,747.9 C1552.9,747.3 1579.1,748.1 1594.8,750.3 C1610.5,752.5 1625.5,757.2 1640.0,761.0 C1654.5,764.8 1677.3,770.5 1682.0,773.0 C1686.7,775.5 1679.7,777.1 1667.9,776.3 C1656.1,775.5 1630.0,772.0 1611.0,768.2 C1592.0,764.4 1565.0,757.0 1554.2,753.6 C1543.4,750.2 1539.3,748.5 1546.1,747.9Z"/><path d="M1728.0,789.1 C1735.2,788.4 1755.7,788.7 1771.0,790.7 C1786.3,792.7 1804.8,797.4 1819.7,801.3 C1834.6,805.2 1854.1,811.6 1860.3,814.3 C1866.5,817.0 1865.1,817.8 1857.0,817.5 C1848.9,817.2 1825.9,814.9 1811.6,812.7 C1797.3,810.5 1784.9,807.5 1771.0,804.5 C1757.1,801.5 1735.2,797.4 1728.0,794.8 C1720.8,792.2 1720.8,789.8 1728.0,789.1Z"/></g>
<path d="M1292.0,598.7 L1350.0,608.5 L1408.0,617.0 L1410.0,625.0 L1396.0,624.5 L1340.0,610.0Z" fill="#1c1c1c" />
<path d="M1423.5,621.4 C1428.7,619.4 1445.2,617.8 1456.0,618.1 C1466.8,618.4 1476.2,620.4 1488.4,623.0 C1500.6,625.6 1517.2,629.8 1529.0,633.6 C1540.8,637.4 1554.4,643.0 1559.0,645.7 C1563.6,648.4 1562.9,649.2 1556.6,649.8 C1550.2,650.3 1533.6,650.2 1520.9,649.0 C1508.2,647.8 1492.8,644.5 1480.3,642.5 C1467.8,640.5 1455.4,638.9 1446.2,636.8 C1437.0,634.7 1428.8,632.6 1425.0,630.0 C1421.2,627.4 1418.3,623.4 1423.5,621.4Z" fill="#303030" />
<path d="M1384.5,657.0 L1395.9,635.2 L1407.3,623.8 L1446.2,635.2 L1446.2,672.0 L1400.0,662.0Z" fill="#2c2c2c" />
<path d="M1410.5,615.0 L1423.5,615.0 L1423.5,630.0 L1410.5,630.0Z" fill="#2a2a2a" />
<path d="M1416.2,606.0 L1424.3,606.0 L1424.3,619.0 L1416.2,619.0Z" fill="#2e2e2e" />
<path d="M1505.0,721.5 L1560.0,713.6 L1702.9,697.4 L1720.7,687.7 L1758.0,687.7 L1767.0,694.2 L1766.2,726.6 L1754.8,739.6 L1746.7,742.9 L1715.8,738.0 L1711.0,728.2 L1698.0,726.6 L1641.2,734.7 L1560.0,742.9 L1505.0,748.5Z" fill="#2a2a2a" />
<path d="M1505.0,721.5 L1560.0,713.6 L1702.9,697.4 L1700.0,705.0 L1560.0,724.0 L1505.0,731.0Z" fill="#353535" />
<path d="M1641.0,730.0 C1645.2,728.2 1661.0,727.3 1670.0,727.0 C1679.0,726.7 1690.7,726.2 1694.7,728.0 C1698.7,729.8 1698.1,736.0 1694.0,738.0 C1689.9,740.0 1678.2,740.0 1670.0,740.0 C1661.8,740.0 1649.8,739.7 1645.0,738.0 C1640.2,736.3 1636.8,731.8 1641.0,730.0Z" fill="#1a1a1a" />
<path d="M1510,750 L1641,737" stroke="#1c1c1c" stroke-width="5" stroke-dasharray="9 5" fill="none"/>
<path d="M1514,726 L1700,702.500" stroke="#1c1c1c" stroke-width="4" stroke-dasharray="6 10" fill="none"/>
<path d="M1720.7,678.0 L1758.0,678.0 L1762.0,692.0 L1718.0,692.0Z" fill="#262626" />
<path d="M1734.5,657.6 L1745.0,657.6 L1745.0,668.0 L1734.5,668.0Z" fill="#333" />
<path d="M1715.8,738.0 L1753.2,741.2 L1732.0,790.7 L1724.0,794.0 L1707.7,793.2Z" fill="#1e1e1e" />
<path d="M1724.0,748.0 L1738.0,750.0 L1734.0,757.0 L1723.0,757.0Z" fill="#9c9c9c" />
<path d="M1722.0,764.0 L1731.0,763.0 L1727.0,772.0 L1721.0,773.0Z" fill="#8a8a8a" />
<path d="M1719.0,780.0 L1725.0,779.0 L1722.0,786.0 L1718.0,787.0Z" fill="#555" />
<path d="M1581.1,647.0 C1584.3,645.5 1596.0,642.9 1608.7,643.0 C1621.4,643.1 1641.2,645.6 1657.4,647.9 C1673.6,650.2 1693.4,654.0 1706.1,656.8 C1718.8,659.6 1728.5,661.4 1733.7,664.9 C1738.9,668.4 1738.9,676.1 1737.0,678.0 C1735.1,679.9 1728.8,676.6 1722.3,676.3 C1715.8,676.0 1707.5,677.1 1698.0,676.3 C1688.5,675.5 1677.7,673.6 1665.5,671.4 C1653.3,669.2 1637.6,666.5 1624.9,663.3 C1612.2,660.0 1596.5,654.6 1589.2,651.9 C1581.9,649.2 1577.8,648.5 1581.1,647.0Z" fill="#0000f2" />
<path d="M1751.6,674.5 L1819.7,687.2 L1925.3,706.3 L1923.6,709.6 L1852.2,697.0 L1803.5,691.5 L1759.7,685.0Z" fill="url(#blu2)" />
<path d="M1734.5,665.7 L1751.6,665.7 L1751.6,684.4 L1734.5,684.4Z" fill="#0000d8" />
<path d="M903.4,733.9 L945.6,727.4 L991.0,732.3 L1062.5,728.2 L1180.0,723.3 L1225.0,720.4 L1225.0,752.0 L1158.2,754.2 L1046.2,759.9 L1033.2,764.7 L979.7,769.6 L958.6,774.5 L952.0,784.2 L909.9,789.9 L896.9,776.1 L894.4,740.4Z" fill="#282828" />
<path d="M952.0,733.0 L991.0,732.3 L1062.5,728.2 L1180.0,723.3 L1225.0,720.4 L1225.0,735.0 L1100.0,741.5 L1000.0,747.0 L975.0,746.0Z" fill="#343434" />
<path d="M981.3,765.0 C985.0,763.2 996.4,762.7 1005.0,762.0 C1013.6,761.3 1028.3,759.3 1033.0,761.0 C1037.7,762.7 1037.7,769.8 1033.0,772.0 C1028.3,774.2 1013.3,773.8 1005.0,774.0 C996.7,774.2 987.0,774.5 983.0,773.0 C979.0,771.5 977.6,766.8 981.3,765.0Z" fill="#181818" />
<path d="M1048,760.500 L1222,752.500" stroke="#1c1c1c" stroke-width="6" stroke-dasharray="9 6" fill="none"/>
<path d="M1000,735.800 L1236,724.600" stroke="#1e1e1e" stroke-width="4" stroke-dasharray="5 10.500" fill="none"/>
<path d="M1006,746 L1236,735" stroke="#2c2c2c" stroke-width="1.500" fill="none"/>
<path d="M898.0,778.0 C900.5,776.8 915.2,783.3 925.0,783.0 C934.8,782.7 952.5,775.7 957.0,776.0 C961.5,776.3 959.8,782.6 952.0,785.0 C944.2,787.4 919.0,791.7 910.0,790.5 C901.0,789.3 895.5,779.2 898.0,778.0Z" fill="#161616" />
<path d="M905.0,722.5 L945.6,722.5 L946.0,736.0 L903.0,737.0Z" fill="#242424" />
<path d="M811.7,686.0 C811.7,683.3 819.9,680.8 828.7,680.3 C837.5,679.8 851.4,680.6 864.4,682.8 C877.4,685.0 895.8,690.2 906.6,693.3 C917.4,696.4 924.5,698.6 929.4,701.4 C934.3,704.2 936.4,706.9 935.8,710.0 C935.2,713.1 928.7,718.2 926.0,720.0 C923.3,721.8 925.0,721.1 919.6,720.9 C914.2,720.6 903.3,720.4 893.6,718.5 C883.9,716.6 872.0,713.1 861.2,709.5 C850.4,705.9 837.0,700.5 828.7,696.6 C820.5,692.7 811.7,688.7 811.7,686.0Z" fill="#313131" />
<path d="M944.0,719.0 L991.0,731.5 L991.0,736.0 L944.0,724.0Z" fill="#121212" />
<path d="M918.0,702.2 L932.0,702.2 L932.0,708.0 L944.8,708.0 L944.8,724.2 L918.0,724.2Z" fill="#2b2b2b" />
<path d="M909.9,789.9 L948.0,785.8 L963.4,841.0 L940.7,844.0Z" fill="#1d1d1d" />
<path d="M921.0,795.0 L944.0,793.5 L948.0,803.0 L926.0,805.0Z" fill="#9c9c9c" />
<path d="M929.0,810.0 L950.0,808.5 L953.0,818.0 L935.0,820.0Z" fill="#9c9c9c" />
<path d="M940.0,827.0 L956.0,826.0 L957.5,834.0 L944.0,835.5Z" fill="#5e5e5e" />
<path d="M1158.4,752.0 L1173.1,752.0 L1164.9,815.2 L1154.4,815.2Z" fill="#1d1d1d" />
<clipPath id="bodyclip"><path d="M1192.5,693.6 C1192.6,683.4 1193.1,686.9 1195.0,681.4 C1196.9,675.9 1196.6,676.5 1199.8,672.9 C1203.0,669.3 1199.6,670.6 1207.1,668.0 C1214.6,665.4 1219.7,664.9 1227.8,663.1 C1235.9,661.3 1226.2,663.6 1237.6,661.3 C1249.0,659.0 1252.0,658.2 1270.5,654.6 C1289.0,651.0 1292.4,650.2 1307.0,647.9 C1321.6,645.6 1315.6,645.9 1325.3,646.1 C1335.0,646.3 1328.1,645.6 1343.5,648.5 C1358.9,651.4 1356.4,651.0 1382.9,657.0 C1409.4,663.0 1419.2,665.5 1443.0,670.9 C1466.8,676.3 1457.9,671.8 1472.2,677.4 C1486.5,683.0 1487.1,683.3 1496.6,692.0 C1506.1,700.7 1504.2,699.8 1507.9,709.9 C1511.6,720.0 1509.7,719.7 1510.4,730.0 C1511.1,740.3 1512.1,737.2 1510.4,748.7 C1508.7,760.2 1509.1,761.8 1503.9,773.1 C1498.7,784.4 1501.3,782.3 1490.9,790.9 C1480.5,799.5 1480.5,799.4 1464.9,805.5 C1449.3,811.6 1449.8,809.7 1432.5,813.6 C1415.2,817.5 1417.2,818.2 1400.0,820.1 C1382.8,822.0 1387.3,823.9 1367.9,820.9 C1348.5,817.9 1353.7,816.3 1327.3,808.7 C1300.9,801.1 1288.6,797.2 1268.8,792.5 C1249.0,787.8 1263.7,794.9 1253.0,791.0 C1242.3,787.1 1240.4,787.5 1228.7,778.0 C1217.0,768.5 1218.3,770.9 1209.2,755.3 C1200.1,739.7 1199.1,736.1 1194.6,719.6 C1190.1,703.1 1192.4,703.8 1192.5,693.6Z"/></clipPath>
<path d="M1192.5,693.6 C1192.6,683.4 1193.1,686.9 1195.0,681.4 C1196.9,675.9 1196.6,676.5 1199.8,672.9 C1203.0,669.3 1199.6,670.6 1207.1,668.0 C1214.6,665.4 1219.7,664.9 1227.8,663.1 C1235.9,661.3 1226.2,663.6 1237.6,661.3 C1249.0,659.0 1252.0,658.2 1270.5,654.6 C1289.0,651.0 1292.4,650.2 1307.0,647.9 C1321.6,645.6 1315.6,645.9 1325.3,646.1 C1335.0,646.3 1328.1,645.6 1343.5,648.5 C1358.9,651.4 1356.4,651.0 1382.9,657.0 C1409.4,663.0 1419.2,665.5 1443.0,670.9 C1466.8,676.3 1457.9,671.8 1472.2,677.4 C1486.5,683.0 1487.1,683.3 1496.6,692.0 C1506.1,700.7 1504.2,699.8 1507.9,709.9 C1511.6,720.0 1509.7,719.7 1510.4,730.0 C1511.1,740.3 1512.1,737.2 1510.4,748.7 C1508.7,760.2 1509.1,761.8 1503.9,773.1 C1498.7,784.4 1501.3,782.3 1490.9,790.9 C1480.5,799.5 1480.5,799.4 1464.9,805.5 C1449.3,811.6 1449.8,809.7 1432.5,813.6 C1415.2,817.5 1417.2,818.2 1400.0,820.1 C1382.8,822.0 1387.3,823.9 1367.9,820.9 C1348.5,817.9 1353.7,816.3 1327.3,808.7 C1300.9,801.1 1288.6,797.2 1268.8,792.5 C1249.0,787.8 1263.7,794.9 1253.0,791.0 C1242.3,787.1 1240.4,787.5 1228.7,778.0 C1217.0,768.5 1218.3,770.9 1209.2,755.3 C1200.1,739.7 1199.1,736.1 1194.6,719.6 C1190.1,703.1 1192.4,703.8 1192.5,693.6Z" fill="url(#bodyg)" />
<path d="M1240.0,651.0 L1249.8,651.0 L1252.0,661.0 L1237.6,662.0Z" fill="#333" />
<g clip-path="url(#bodyclip)">
<path d="M1185.0,650.0 L1226.0,655.0 L1232.0,668.0 L1236.0,700.0 L1237.0,750.0 L1242.0,800.0 L1185.0,800.0Z" fill="#171717" />
<path d="M1226.0,655.0 L1234.0,655.0 L1240.0,668.0 L1241.0,696.0 L1236.0,700.0 L1232.0,668.0Z" fill="#272727" />
<path d="M1240.0,696.0 C1253.7,690.7 1260.7,692.9 1282.6,695.4 C1304.5,697.9 1298.5,696.3 1313.1,704.5 C1327.7,712.7 1325.5,709.3 1331.3,722.8 C1337.1,736.3 1336.2,735.0 1332.6,749.6 C1329.0,764.2 1330.5,760.5 1319.2,771.5 C1307.9,782.5 1309.4,779.4 1294.8,786.1 C1280.2,792.9 1286.9,793.4 1270.5,794.0 C1254.1,794.6 1250.3,801.3 1240.0,788.0 C1229.7,774.7 1236.9,772.1 1236.0,749.6 C1235.1,727.1 1235.8,729.2 1237.0,713.1 C1238.2,697.0 1226.3,701.3 1240.0,696.0Z" fill="#1c1c1c" />
<path d="M1238.0,752.0 C1251.3,741.3 1264.9,751.7 1290.0,748.0 C1315.1,744.3 1320.6,737.6 1332.0,738.0 C1343.4,738.4 1336.0,740.7 1332.6,749.6 C1329.2,758.5 1329.3,761.8 1319.2,771.5 C1309.1,781.2 1307.8,780.1 1294.8,786.1 C1281.8,792.1 1285.1,793.5 1270.5,794.0 C1255.9,794.5 1248.7,799.2 1240.0,788.0 C1231.3,776.8 1224.7,762.7 1238.0,752.0Z" fill="#191919" />
<path d="M1300.0,760.0 L1520.0,740.0 L1520.0,830.0 L1300.0,830.0Z" fill="url(#undg)" />
</g>
<path d="M1235.5,668.5 L1239.5,668.0 L1243.5,689.0 L1240.0,689.5Z" fill="#161616" />
<path d="M1244.3,667.8 L1248.3,667.3 L1250.2,688.6 L1246.7,689.1Z" fill="#161616" />
<path d="M1253.1,667.1 L1257.1,666.6 L1256.9,688.2 L1253.4,688.7Z" fill="#161616" />
<path d="M1261.9,666.4 L1265.9,665.9 L1263.6,687.8 L1260.1,688.3Z" fill="#161616" />
<path d="M1270.7,665.7 L1274.7,665.2 L1270.3,687.4 L1266.8,687.9Z" fill="#161616" />
<path d="M1279.5,665.0 L1283.5,664.5 L1277.0,687.0 L1273.5,687.5Z" fill="#161616" />
<path d="M1190.0,721.5 L1225.0,720.0 L1237.0,722.0 L1237.0,752.0 L1190.0,753.5Z" fill="#2a2a2a" />
<path d="M1190.0,721.5 L1225.0,720.0 L1237.0,722.0 L1237.0,736.0 L1190.0,737.5Z" fill="#383838" />
<path d="M1162.1,700.3 L1179.1,700.3 L1177.9,724.0 L1160.9,724.0Z" fill="#292929" />
<path d="M1179.1,698.4 L1207.1,696.0 L1208.4,711.8 L1180.4,713.1Z" fill="url(#stubg)" />
<path d="M1250.0,789.0 L1273.0,789.5 L1271.0,798.0 L1256.0,798.0Z" fill="#1e1e1e" />
<path d="M1268.8,792.5 L1335.4,760.0 L1384.0,768.1 L1382.5,781.1 L1304.5,821.7 L1278.6,813.6 L1259.0,854.2 L1236.4,844.4 L1250.0,815.0Z" fill="#2a2a2a" />
<path d="M1268.8,792.5 L1335.4,760.0 L1384.0,768.1 L1300.0,812.0 L1262.0,806.0Z" fill="#3e3e3e" />
<g stroke="#242424" stroke-width="2.4"><line x1="1280.0" y1="790.5" x2="1318.0" y2="797.0"/><line x1="1287.6" y1="786.8" x2="1325.6" y2="793.3"/><line x1="1295.2" y1="783.1" x2="1333.2" y2="789.6"/><line x1="1302.8" y1="779.4" x2="1340.8" y2="785.9"/><line x1="1310.4" y1="775.7" x2="1348.4" y2="782.2"/><line x1="1318.0" y1="772.0" x2="1356.0" y2="778.5"/><line x1="1325.6" y1="768.3" x2="1363.6" y2="774.8"/><line x1="1333.2" y1="764.6" x2="1371.2" y2="771.1"/><line x1="1340.8" y1="760.9" x2="1378.8" y2="767.4"/></g>
<path d="M1176.3,818.0 C1182.6,814.1 1196.2,812.0 1205.0,812.0 C1213.8,812.0 1229.8,813.1 1234.7,818.0 C1239.6,822.9 1236.7,836.3 1237.5,844.4 C1238.3,852.5 1242.6,864.0 1240.0,872.0 C1237.4,880.0 1228.9,893.9 1220.1,898.0 C1211.3,902.1 1189.8,902.3 1181.2,899.6 C1172.6,896.9 1165.7,886.3 1163.0,880.1 C1160.3,873.9 1163.0,864.3 1163.0,858.0 C1163.0,851.7 1161.0,843.9 1163.0,837.9 C1165.0,831.9 1170.0,821.9 1176.3,818.0Z" fill="#272727" />
<path d="M1165.0,884.0 C1169.4,881.4 1183.2,890.9 1200.0,889.0 C1216.8,887.1 1232.3,873.8 1237.0,876.0 C1241.7,878.2 1233.1,892.9 1220.1,898.5 C1207.1,904.1 1194.1,903.4 1181.2,900.0 C1168.3,896.6 1160.6,886.6 1165.0,884.0Z" fill="#151515" />
<path d="M1172.0,826.0 C1181.3,819.6 1187.9,818.0 1205.0,818.0 C1222.1,818.0 1227.7,819.6 1236.0,826.0 C1244.3,832.4 1244.3,836.1 1236.0,842.0 C1227.7,847.9 1222.6,848.0 1205.0,848.0 C1187.4,848.0 1178.8,847.9 1170.0,842.0 C1161.2,836.1 1162.7,832.4 1172.0,826.0Z" fill="#1f1f1f" />
<path d="M1181.2,899.0 L1220.1,897.5 L1223.8,948.7 L1210.8,957.6 L1202.3,956.8Z" fill="#151515" />
<path d="M1199.0,902.0 L1204.0,902.0 L1204.5,910.0 L1200.5,910.0Z" fill="#8a8a8a" />
<path d="M1204.0,920.0 L1207.0,920.0 L1208.0,931.0 L1205.5,931.0Z" fill="#555" />
<path d="M1034.9,764.7 C1037.5,763.3 1045.5,763.4 1056.0,763.8 C1066.5,764.2 1063.9,762.7 1080.0,766.5 C1096.1,770.3 1106.1,773.8 1124.8,780.2 C1143.5,786.6 1145.7,788.1 1160.0,794.0 C1174.3,799.9 1179.5,800.4 1186.0,805.5 C1192.5,810.6 1197.8,816.1 1188.0,816.0 C1178.2,815.9 1166.6,812.0 1144.0,805.0 C1121.4,798.0 1110.9,792.8 1091.3,786.0 C1071.7,779.2 1070.8,779.7 1060.0,776.0 C1049.2,772.3 1050.9,772.6 1045.0,770.0 C1039.1,767.4 1032.3,766.1 1034.9,764.7Z" fill="#0000ee" />
<path d="M1191.7,794.0 L1203.9,794.0 L1203.9,804.0 L1191.7,804.0Z" fill="#414141" />
<path d="M1205.5,810.3 C1213.6,808.5 1231.2,807.3 1246.1,809.5 C1261.0,811.7 1278.6,818.3 1294.8,823.3 C1311.0,828.3 1330.0,834.1 1343.5,839.5 C1357.0,844.9 1368.8,851.3 1376.0,855.8 C1383.2,860.3 1386.0,863.6 1386.5,866.3 C1387.0,869.0 1385.0,871.0 1379.2,872.0 C1373.4,873.0 1363.0,873.1 1351.6,872.0 C1340.2,870.9 1325.9,868.8 1311.0,865.5 C1296.1,862.2 1275.8,857.1 1262.3,852.5 C1248.8,847.9 1240.7,843.3 1229.9,837.9 C1219.1,832.5 1201.5,824.6 1197.4,820.0 C1193.3,815.4 1197.4,812.0 1205.5,810.3Z" fill="#0000f2" />
<path d="M1186.0,802.2 L1206.3,802.2 L1206.3,818.4 L1186.0,818.4Z" fill="#0000f0" />
</svg>
<svg class="abs" style="left:158px;top:1384px" width="2468" height="96" viewBox="158 1384 2468 96">
<defs><linearGradient id="pz" x1="0" x2="1"><stop offset="0" stop-color="#d8d8d8"/><stop offset="0.5" stop-color="#d4d4d4"/><stop offset="1" stop-color="#c8c8c8"/></linearGradient>
<linearGradient id="st" x1="0" x2="1"><stop offset="0" stop-color="#a2a2a2"/><stop offset="1" stop-color="#969696"/></linearGradient></defs>
<rect x="303.500" y="1410.500" width="10.500" height="33.500" fill="url(#pz)"/><rect x="320" y="1410.500" width="10.500" height="33.500" fill="url(#pz)"/>
<polygon points="396,1410.500 412,1427.500 396,1444" fill="url(#st)"/><rect x="414.500" y="1410.500" width="9.500" height="33.500" fill="#9a9a9a"/>
<polygon points="571.500,1432 588,1432 579.800,1448" fill="#3a3a3a"/>
</svg>
<div class="lbl" id="l1" style="left:450px">Steps:</div>
<div class="lbl" id="l1b" style="left:547px;top:1410px;font-size:22px;line-height:32px">1</div>
<div class="lbl" id="l2" style="left:613px;letter-spacing:-0.17px">Real Time Factor:</div>
<div class="fld" id="f2" style="left:836px;width:180px">0.96</div>
<div class="lbl" id="l3" style="left:1035px;letter-spacing:-0.15px">Sim Time:</div>
<div class="fld" id="f3" style="left:1168px;width:220px">00 00:00:32.131</div>
<div class="lbl" id="l4" style="left:1407px;letter-spacing:-0.1px">Real Time:</div>
<div class="fld" id="f4" style="left:1550px;width:220px">00 00:00:33.376</div>
<div class="lbl" id="l5" style="left:1789px">Iterations:</div>
<div class="fld" id="f5" style="left:1922px;width:220px">32131</div>
<div class="lbl" id="l6" style="left:2161px;letter-spacing:0.7px">FPS:</div>
<div class="fld" id="f6" style="left:2236px;width:180px">41.9779</div>
<div class="abs" style="left:2424px;top:1410px;width:84px;height:42px;background:#505050;border:4px solid #787878"></div>
<div class="lbl" id="l7" style="left:2431.500px;top:1413px;color:#ececec;-webkit-text-stroke:0.3px #ececec">Reset</div>
<svg class="abs" style="left:2620px;top:1484px" width="32" height="32" viewBox="2620 1484 32 32"><g stroke="#5a5a5a" stroke-width="1.600"><line x1="2625.400" y1="1510.700" x2="2646.600" y2="1489"/><line x1="2634" y1="1510.700" x2="2646.600" y2="1497.700"/><line x1="2641.500" y1="1510.700" x2="2646.600" y2="1505.500"/></g></svg>
<div class="abs" style="left:136px;top:797px;width:20px;height:20px;background:linear-gradient(#fff,#f4f4f4)"><div class="abs" style="left:4px;top:4px;width:12px;height:12px;border-radius:50%;background:radial-gradient(circle at 50% 45%,#dedede,#cacaca);box-shadow:0 0 0 .5px #c2c2c2"></div></div>
<div class="abs" style="left:2628px;top:797px;width:20px;height:20px;background:linear-gradient(#fff,#f4f4f4)"><div class="abs" style="left:4px;top:4px;width:12px;height:12px;border-radius:50%;background:radial-gradient(circle at 50% 45%,#dedede,#cacaca);box-shadow:0 0 0 .5px #c2c2c2"></div></div>
</body></html>
